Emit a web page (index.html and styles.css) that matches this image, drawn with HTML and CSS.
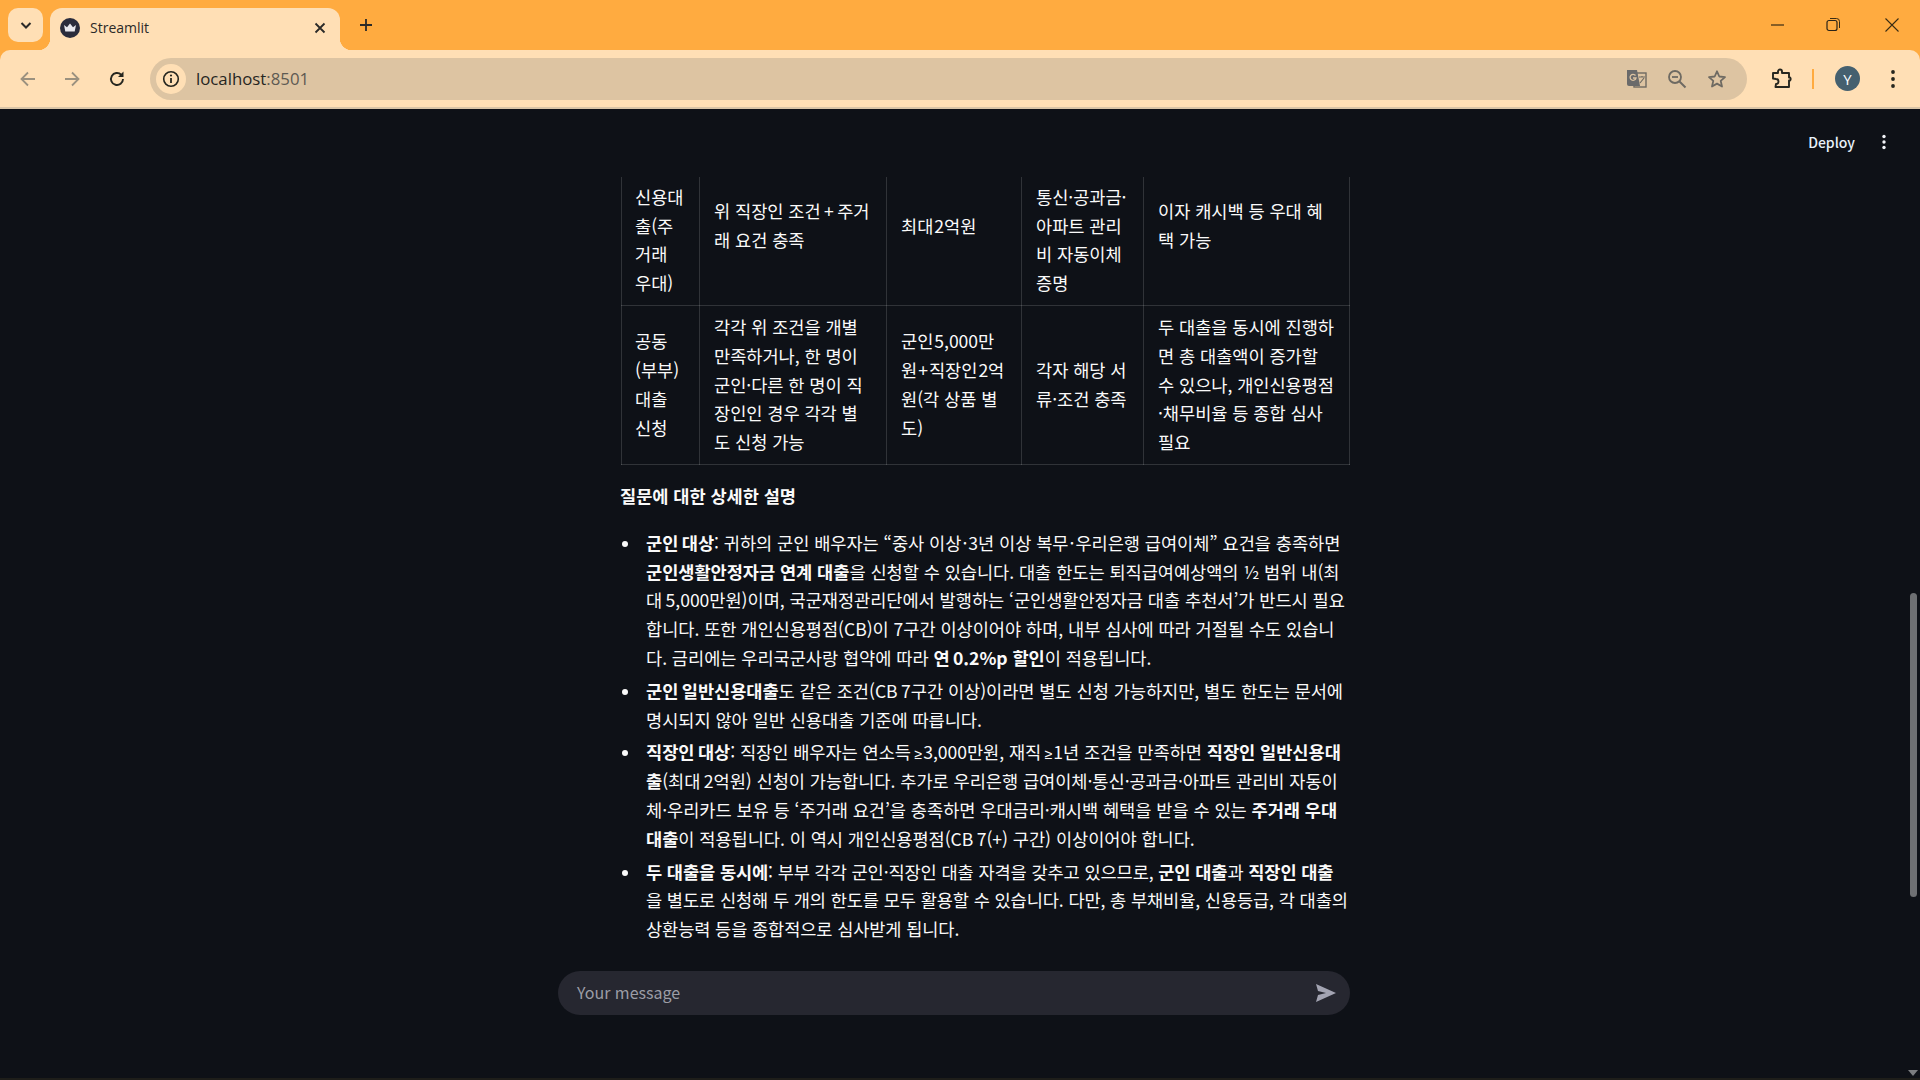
FILE: index.html
```html
<!DOCTYPE html>
<html lang="ko">
<head>
    <meta charset="UTF-8">
    <title>Streamlit</title>
    <link rel="stylesheet" href="styles.css">
</head>
<body>
    <div class="tabstrip">
        <div class="tab-search">
            <svg width="14" height="14" viewBox="0 0 14 14"><path d="M2.5 5l4.5 4.5L11.500 5" fill="none" stroke="#2b2a28" stroke-width="2"/></svg>
        </div>
        <div class="tab">
            <svg class="favicon" width="20" height="20" viewBox="0 0 20 20">
                <circle cx="10" cy="10" r="10" fill="#2a2c3c"/>
                <path d="M4 7l3 2.200L10 5.500l3 3.700L16 7l-1.300 6.500H5.300z" fill="#e8e8ee"/>
            </svg>
            <span class="tab-title">Streamlit</span>
            <svg class="tab-close" width="12" height="12" viewBox="0 0 12 12"><path d="M1.500 1.500l9 9M10.500 1.500l-9 9" stroke="#2b2a28" stroke-width="1.800"/></svg>
        </div>
        <svg class="tab-new" width="14" height="14" viewBox="0 0 14 14"><path d="M7 1v12M1 7h12" stroke="#2b2a28" stroke-width="1.800"/></svg>
        <div class="window-controls">
            <svg width="18" height="18" viewBox="0 0 18 18"><path d="M0 9h13" stroke="#3a2c14" stroke-width="1.200"/></svg>
            <svg width="18" height="18" viewBox="0 0 18 18"><rect x="2" y="4.500" width="10" height="10" rx="2" fill="none" stroke="#2b2418" stroke-width="1.200"/><path d="M5 2.500h6.500a3 3 0 0 1 3 3V12" fill="none" stroke="#3a2c14"/></svg>
            <svg width="18" height="18" viewBox="0 0 18 18"><path d="M2.500 2.500l13 13M15.500 2.500l-13 13" stroke="#3a2c14" stroke-width="1.100"/></svg>
        </div>
    </div>

    <div class="toolbar">
        <svg class="nav-icon" width="18" height="18" viewBox="0 0 18 18"><path d="M16 9H3M9 2.500L2.500 9 9 15.500" fill="none" stroke="#9b917f" stroke-width="1.800"/></svg>
        <svg class="nav-icon" width="18" height="18" viewBox="0 0 18 18"><path d="M2 9h13M9 2.500L15.500 9 9 15.500" fill="none" stroke="#9b917f" stroke-width="1.800"/></svg>
        <svg class="nav-icon" width="18" height="18" viewBox="0 0 18 18"><path d="M15 9a6 6 0 1 1-1.800-4.300" fill="none" stroke="#26261f" stroke-width="1.900"/><path d="M15.500 1.500v5.500H10z" fill="#26261f"/></svg>
        <div class="omnibox">
            <div class="site-info">
                <svg width="18" height="18" viewBox="0 0 18 18"><circle cx="9" cy="9" r="7.300" fill="none" stroke="#26261f" stroke-width="1.600"/><path d="M9 8v5" stroke="#26261f" stroke-width="1.800"/><circle cx="9" cy="5.500" r="1.100" fill="#26261f"/></svg>
            </div>
            <span class="url">localhost<span class="url-port">:8501</span></span>
            <div class="omni-actions">
                <svg class="translate-icon" width="22" height="22" viewBox="0 0 22 22">
                    <rect x="8" y="5" width="12" height="14" fill="none" stroke="#6e6a62" stroke-width="1.400"/>
                    <path d="M1 2h10l3 16H3a2 2 0 0 1-2-2z" fill="#6a6a6a"/>
                    <path d="M9.500 7.500a3 3 0 1 0 .5 2.500H7" fill="none" stroke="#ddc4a2" stroke-width="1.300"/>
                    <path d="M13 9h6M16 8v1.500M14 15l4-5" fill="none" stroke="#6e6a62" stroke-width="1.200"/>
                </svg>
                <svg width="20" height="20" viewBox="0 0 20 20"><circle cx="8" cy="8" r="6" fill="none" stroke="#6e6a62" stroke-width="1.800"/><path d="M5 8h6" stroke="#6e6a62" stroke-width="1.800"/><path d="M12.500 12.500l6 6" stroke="#6e6a62" stroke-width="2"/></svg>
                <svg width="20" height="20" viewBox="0 0 20 20"><path d="M10 2.300l2.300 5.200 5.700.6-4.300 3.800 1.300 5.600-5-2.900-5 2.900 1.300-5.600L2 8.100l5.700-.6z" fill="none" stroke="#6e6a62" stroke-width="1.800" stroke-linejoin="round"/></svg>
            </div>
        </div>
        <svg class="ext-icon" width="22" height="22" viewBox="0 0 22 22"><path d="M2 5h5V3.500a2 2 0 0 1 4 0V5h7v4.500h1a2 2 0 0 1 0 3h-1V19H4.500L5 16a2.500 2.500 0 0 0 0-5l-3-.5z" fill="none" stroke="#26261f" stroke-width="1.900" stroke-linejoin="round"/></svg>
        <div class="toolbar-divider"></div>
        <div class="avatar">Y</div>
        <svg class="menu-icon" width="6" height="20" viewBox="0 0 6 20"><circle cx="3" cy="3" r="1.900" fill="#26261f"/><circle cx="3" cy="10" r="1.900" fill="#26261f"/><circle cx="3" cy="17" r="1.900" fill="#26261f"/></svg>
    </div>

    <div class="page">
        <div class="app-header">
            <span class="deploy">Deploy</span>
            <svg width="6" height="16" viewBox="0 0 6 16"><circle cx="3" cy="2.500" r="1.700" fill="#f2f4f8"/><circle cx="3" cy="8" r="1.700" fill="#f2f4f8"/><circle cx="3" cy="13.500" r="1.700" fill="#f2f4f8"/></svg>
        </div>

        <div class="chat-column">
            <div class="messages">
                <div class="message">
                    <table>
                        <tr>
                            <td><br>신용대출(주거래 우대)</td>
                            <td>위 직장인 조건&#8201;+&#8201;주거래 요건 충족</td>
                            <td>최대&#8202;2억원</td>
                            <td><br>통신·공과금·아파트 관리비 자동이체 증명</td>
                            <td>이자 캐시백 등 우대 혜택 가능</td>
                        </tr>
                        <tr>
                            <td>공동(부부) 대출 신청</td>
                            <td>각각 위 조건을 개별 만족하거나, 한 명이 군인·다른 한 명이 직장인인 경우 각각 별도 신청 가능</td>
                            <td>군인&#8202;5,000만원&#8202;+&#8202;직장인&#8202;2억원(각 상품 별도)</td>
                            <td>각자 해당 서류·조건 충족</td>
                            <td>두 대출을 동시에 진행하면 총 대출액이 증가할 수 있으나, 개인신용평점·채무비율 등 종합 심사 필요</td>
                        </tr>
                    </table>

                    <p class="section-title"><strong>질문에 대한 상세한 설명</strong></p>

                    <ul>
                        <li><strong>군인&#8201;대상</strong>: 귀하의 군인 배우자는 “중사 이상&#8202;·&#8202;3년 이상 복무&#8202;·&#8202;우리은행 급여이체” 요건을 충족하면<br><strong>군인생활안정자금 연계 대출</strong>을 신청할 수 있습니다. 대출 한도는 퇴직급여예상액의 ½ 범위 내(최<br>대&#8201;5,000만원)이며, 국군재정관리단에서 발행하는 ‘군인생활안정자금 대출 추천서’가 반드시 필요<br>합니다. 또한 개인신용평점(CB)이 7구간 이상이어야 하며, 내부 심사에 따라 거절될 수도 있습니<br>다. 금리에는 우리국군사랑 협약에 따라 <strong>연&#8201;0.2%p 할인</strong>이 적용됩니다.</li>
                        <li><strong>군인&#8201;일반신용대출</strong>도 같은 조건(CB&#8201;7구간 이상)이라면 별도 신청 가능하지만, 별도 한도는 문서에<br>명시되지 않아 일반 신용대출 기준에 따릅니다.</li>
                        <li><strong>직장인&#8201;대상</strong>: 직장인 배우자는 연소득&#8201;<span class="sym">≥</span>&#8202;3,000만원, 재직&#8201;<span class="sym">≥</span>&#8202;1년 조건을 만족하면 <strong>직장인 일반신용대</strong><br><strong>출</strong>(최대&#8201;2억원) 신청이 가능합니다. 추가로 우리은행 급여이체·통신·공과금·아파트 관리비 자동이<br>체·우리카드 보유 등 ‘주거래 요건’을 충족하면 우대금리·캐시백 혜택을 받을 수 있는 <strong>주거래 우대</strong><br><strong>대출</strong>이 적용됩니다. 이 역시 개인신용평점(CB&#8201;7(+) 구간) 이상이어야 합니다.</li>
                        <li><strong>두 대출을 동시에</strong>: 부부 각각 군인·직장인 대출 자격을 갖추고 있으므로, <strong>군인 대출</strong>과 <strong>직장인 대출</strong><br>을 별도로 신청해 두 개의 한도를 모두 활용할 수 있습니다. 다만, 총 부채비율, 신용등급, 각 대출의<br>상환능력 등을 종합적으로 심사받게 됩니다.</li>
                    </ul>
                </div>
            </div>

            <div class="chat-input">
                <span class="placeholder">Your message</span>
                <svg width="20" height="18" viewBox="0 0 20 18"><path d="M0 0l20 9L0 18l2-7 8-2-8-2z" fill="#a3a4b2"/></svg>
            </div>
        </div>

        <div class="scroll-thumb"></div>
        <div class="scroll-arrow"></div>
    </div>
</body>
</html>
```

FILE: styles.css
```css
* {
    box-sizing: border-box;
}
html, body {
    height: 100%;
}
body {
    margin: 0;
    overflow: hidden;
    display: flex;
    flex-direction: column;
    background-color: #ffab40;
    font-family: "Noto Sans CJK KR", sans-serif;
}

/* tab strip */
.tabstrip {
    height: 50px;
    flex-shrink: 0;
    display: flex;
    align-items: flex-end;
    padding-left: 8px;
    background-color: #ffab40;
}
.tab-search {
    width: 35px;
    height: 34px;
    margin-bottom: 8px;
    margin-right: 7px;
    display: flex;
    align-items: center;
    justify-content: center;
    border-radius: 10px;
    background-color: #ffdfb5;
}
.tab {
    position: relative;
    width: 290px;
    height: 42px;
    display: flex;
    align-items: center;
    padding: 0 14px 0 10px;
    border-radius: 12px 12px 0 0;
    background-color: #ffdfb5;
}
.tab::after {
    content: "";
    position: absolute;
    right: -12px;
    bottom: 0;
    width: 12px;
    height: 12px;
    background: radial-gradient(circle at 100% 0, transparent 12px, #ffdfb5 12.5px);
}
.tab::before {
    content: "";
    position: absolute;
    left: -12px;
    bottom: 0;
    width: 12px;
    height: 12px;
    background: radial-gradient(circle at 0 0, transparent 12px, #ffdfb5 12.5px);
}
.favicon {
    margin-bottom: 2px;
}
.tab-title {
    flex: 1;
    margin-left: 10px;
    margin-bottom: 3px;
    font-family: "Open Sans", sans-serif;
    font-size: 14px;
    color: #2b2a28;
}
.tab-close {
    margin-bottom: 2px;
}
.tab-new {
    margin-left: 19px;
    margin-bottom: 18px;
}
.window-controls {
    margin-left: auto;
    display: flex;
    gap: 36px;
    padding-right: 19px;
    margin-bottom: 16px;
}
.window-controls svg:last-child {
    margin-left: 4px;
}

/* toolbar */
.toolbar {
    height: 59px;
    flex-shrink: 0;
    display: flex;
    align-items: center;
    padding-left: 19px;
    border-bottom: 2px solid #d9c4a6;
    border-radius: 10px 10px 0 0;
    background-color: #ffdfb5;
}
.nav-icon {
    margin-right: 26px;
}
.nav-icon:nth-child(2) {
    margin-right: 27px;
}
.nav-icon:nth-child(3) {
    margin-right: 24px;
}
.omnibox {
    width: 1597px;
    height: 42px;
    display: flex;
    align-items: center;
    padding-left: 6px;
    border-radius: 21px;
    background-color: #ddc4a2;
}
.site-info {
    width: 30px;
    height: 30px;
    display: flex;
    align-items: center;
    justify-content: center;
    border-radius: 50%;
    background-color: #ffdfb5;
}
.url {
    margin-left: 10px;
    font-family: "Open Sans", sans-serif;
    font-size: 16.800px;
    color: #26261f;
}
.url-port {
    color: #5e5a52;
}
.omni-actions {
    margin-left: auto;
    display: flex;
    align-items: center;
    gap: 20px;
    padding-right: 20px;
}
.translate-icon {
    margin-right: -1px;
}
.ext-icon {
    margin-left: 24px;
}
.toolbar-divider {
    width: 2px;
    height: 20px;
    margin-left: 19px;
    background-color: #ffab40;
}
.avatar {
    width: 25px;
    height: 25px;
    margin-left: 21px;
    display: flex;
    align-items: center;
    justify-content: center;
    border-radius: 50%;
    background-color: #45606f;
    font-family: "Open Sans", sans-serif;
    font-size: 15px;
    color: #ffffff;
}
.menu-icon {
    margin-left: 30px;
}

/* streamlit page */
.page {
    position: relative;
    flex: 1;
    padding-right: 12px;
    background-color: #0e1117;
    color: #fafafa;
    border-bottom: 2px solid #1e1e1a;
}
.app-header {
    position: absolute;
    top: 25px;
    right: 33px;
    display: flex;
    align-items: center;
    gap: 26px;
}
.deploy {
    font-size: 14px;
    line-height: 16px;
    font-weight: 500;
    color: #e8f1fb;
}
.chat-column {
    width: 792px;
    margin: 0 auto;
    padding-top: 68px;
}
.messages {
    height: 778px;
    overflow: hidden;
}
.message {
    margin-top: -31px;
    padding-left: 62px;
    font-size: 17.600px;
    line-height: 28.800px;
    letter-spacing: -0.05px;
}
table {
    width: 728px;
    margin-left: 1px;
    table-layout: fixed;
    border-collapse: collapse;
}
td {
    padding: 7px 13px 7px 14px;
    border: 1px solid rgba(250, 250, 250, 0.15);
}
td:nth-child(1) {
    width: 78px;
    padding-left: 13px;
}
td:nth-child(2) { width: 187px; }
td:nth-child(3) { width: 135px; }
td:nth-child(4) { width: 122px; }
td:nth-child(5) { width: 206px; }
.section-title {
    margin: 17px 0 18px;
}
strong {
    font-weight: 700;
}
.sym {
    font-family: "Noto Sans", sans-serif;
    font-size: 14px;
    line-height: 0;
}
ul {
    margin: 0;
    padding-left: 26px;
    list-style: none;
    white-space: nowrap;
}
li {
    position: relative;
    margin-bottom: 4px;
}
li:last-child {
    letter-spacing: -0.12px;
}
li::before {
    content: "";
    position: absolute;
    left: -24px;
    top: 12px;
    width: 6px;
    height: 6px;
    border-radius: 50%;
    background-color: #fafafa;
}
.chat-input {
    height: 44px;
    margin-top: 16px;
    display: flex;
    align-items: center;
    justify-content: space-between;
    padding: 0 14px 0 19px;
    border-radius: 22px;
    background-color: #262730;
}
.placeholder {
    margin-bottom: 3px;
    font-size: 16px;
    color: #9c9da6;
}
.scroll-thumb {
    position: absolute;
    top: 484px;
    right: 3px;
    width: 7px;
    height: 304px;
    border-radius: 4px;
    background-color: #6e7073;
}
.scroll-arrow {
    position: absolute;
    bottom: 2px;
    right: 2px;
    border-left: 5px solid transparent;
    border-right: 5px solid transparent;
    border-top: 6px solid #7b7d80;
}
```
